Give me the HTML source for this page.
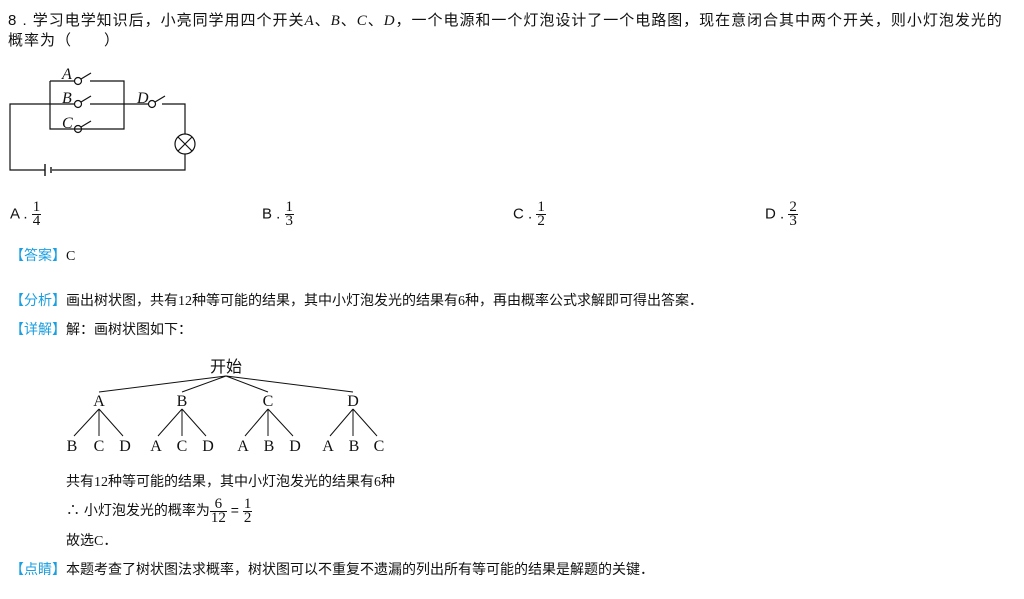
<!DOCTYPE html><html><head><meta charset="utf-8"><style>
body{margin:0;width:1024px;height:599px;background:#fff;position:relative;overflow:hidden;font-family:"Liberation Serif","Noto Sans CJK SC",serif;color:#111}
.t{position:absolute;font-size:14px;white-space:nowrap;font-family:"Liberation Sans","Noto Sans CJK SC",sans-serif}
.b{color:#1a9fe0}
.s{font-family:"Liberation Serif",serif}
.fr{display:inline-block;vertical-align:middle;text-align:center;font-family:"Liberation Serif",serif;font-size:15px;line-height:13px}
.fr span{display:block;padding:0 1px}.fr span:first-child{border-bottom:1px solid #111}
</style></head><body>
<div class="t" style="left:8px;top:9px;font-size:15px;letter-spacing:0.98px">8 . 学习电学知识后，小亮同学用四个开关<i class="s">A</i>、<i class="s">B</i>、<i class="s">C</i>、<i class="s">D</i>，一个电源和一个灯泡设计了一个电路图，现在意闭合其中两个开关，则小灯泡发光的</div>
<div class="t" style="left:8px;top:29px;font-size:15px;letter-spacing:1px">概率为（　　）</div>
<svg style="position:absolute;left:0;top:60px" width="210" height="120" stroke="#111" fill="none" stroke-width="1.2">
<path d="M45,110H10V44H50M50,21V69H124V21H90M74,21H50M50,44H74M90,44H124M90,69H124M74,69H50M124,44H148M162,44H185V74M185,94V110H52"/>
<path d="M45,104V116M51,107V113" stroke-width="1.4"/>
<circle cx="78" cy="21" r="3.5"/><path d="M81,19L91,13"/>
<circle cx="78" cy="44" r="3.5"/><path d="M81,42L91,36"/>
<circle cx="78" cy="69" r="3.5"/><path d="M81,67L91,61"/>
<circle cx="152" cy="44" r="3.5"/><path d="M155,42L165,36"/>
<circle cx="185" cy="84" r="10"/><path d="M178,77L192,91M192,77L178,91"/>
<g fill="#111" stroke="none" font-family="Liberation Serif" font-style="italic" font-size="16"><text x="62" y="19">A</text><text x="62" y="43">B</text><text x="62" y="68">C</text><text x="137" y="43">D</text></g>
</svg>
<div class="t" style="left:10px;top:201px;font-size:15px">A . <span class="fr"><span>1</span><span>4</span></span></div>
<div class="t" style="left:262px;top:201px;font-size:15px">B . <span class="fr"><span>1</span><span>3</span></span></div>
<div class="t" style="left:513px;top:201px;font-size:15px">C . <span class="fr"><span>1</span><span>2</span></span></div>
<div class="t" style="left:765px;top:201px;font-size:15px">D . <span class="fr"><span>2</span><span>3</span></span></div>
<div class="t" style="left:10px;top:245px"><span class="b">【答案】</span><span class="s">C</span></div>
<div class="t" style="left:10px;top:290px"><span class="b">【分析】</span>画出树状图，共有<span class="s">12</span>种等可能的结果，其中小灯泡发光的结果有<span class="s">6</span>种，再由概率公式求解即可得出答案．</div>
<div class="t" style="left:10px;top:319px"><span class="b">【详解】</span>解：画树状图如下：</div>
<svg style="position:absolute;left:60px;top:352px" width="340" height="105" stroke="#111" stroke-width="1" font-family="Liberation Serif" font-size="16">
<text x="166" y="20" fill="#111" stroke="none" text-anchor="middle" font-family="Noto Sans CJK SC">开始</text>
<path d="M166,24L39,40M166,24L122,40M166,24L208,40M166,24L293,40"/>
<g fill="#111" stroke="none" text-anchor="middle"><text x="39" y="54">A</text><text x="122" y="54">B</text><text x="208" y="54">C</text><text x="293" y="54">D</text>
<text x="12" y="99">B</text><text x="39" y="99">C</text><text x="65" y="99">D</text><text x="96" y="99">A</text><text x="122" y="99">C</text><text x="148" y="99">D</text><text x="183" y="99">A</text><text x="209" y="99">B</text><text x="235" y="99">D</text><text x="268" y="99">A</text><text x="294" y="99">B</text><text x="319" y="99">C</text></g>
<path d="M39,57L14,84M39,57V84M39,57L63,84M122,57L98,84M122,57V84M122,57L146,84M208,57L185,84M208,57V84M208,57L233,84M293,57L270,84M293,57V84M293,57L317,84"/>
</svg>
<div class="t" style="left:66px;top:471px">共有<span class="s">12</span>种等可能的结果，其中小灯泡发光的结果有<span class="s">6</span>种</div>
<div class="t" style="left:66px;top:498px">∴ 小灯泡发光的概率为<span class="fr"><span>6</span><span>12</span></span> = <span class="fr"><span>1</span><span>2</span></span></div>
<div class="t" style="left:66px;top:530px">故选<span class="s">C</span>．</div>
<div class="t" style="left:10px;top:559px"><span class="b">【点睛】</span>本题考查了树状图法求概率，树状图可以不重复不遗漏的列出所有等可能的结果是解题的关键．</div>
</body></html>
